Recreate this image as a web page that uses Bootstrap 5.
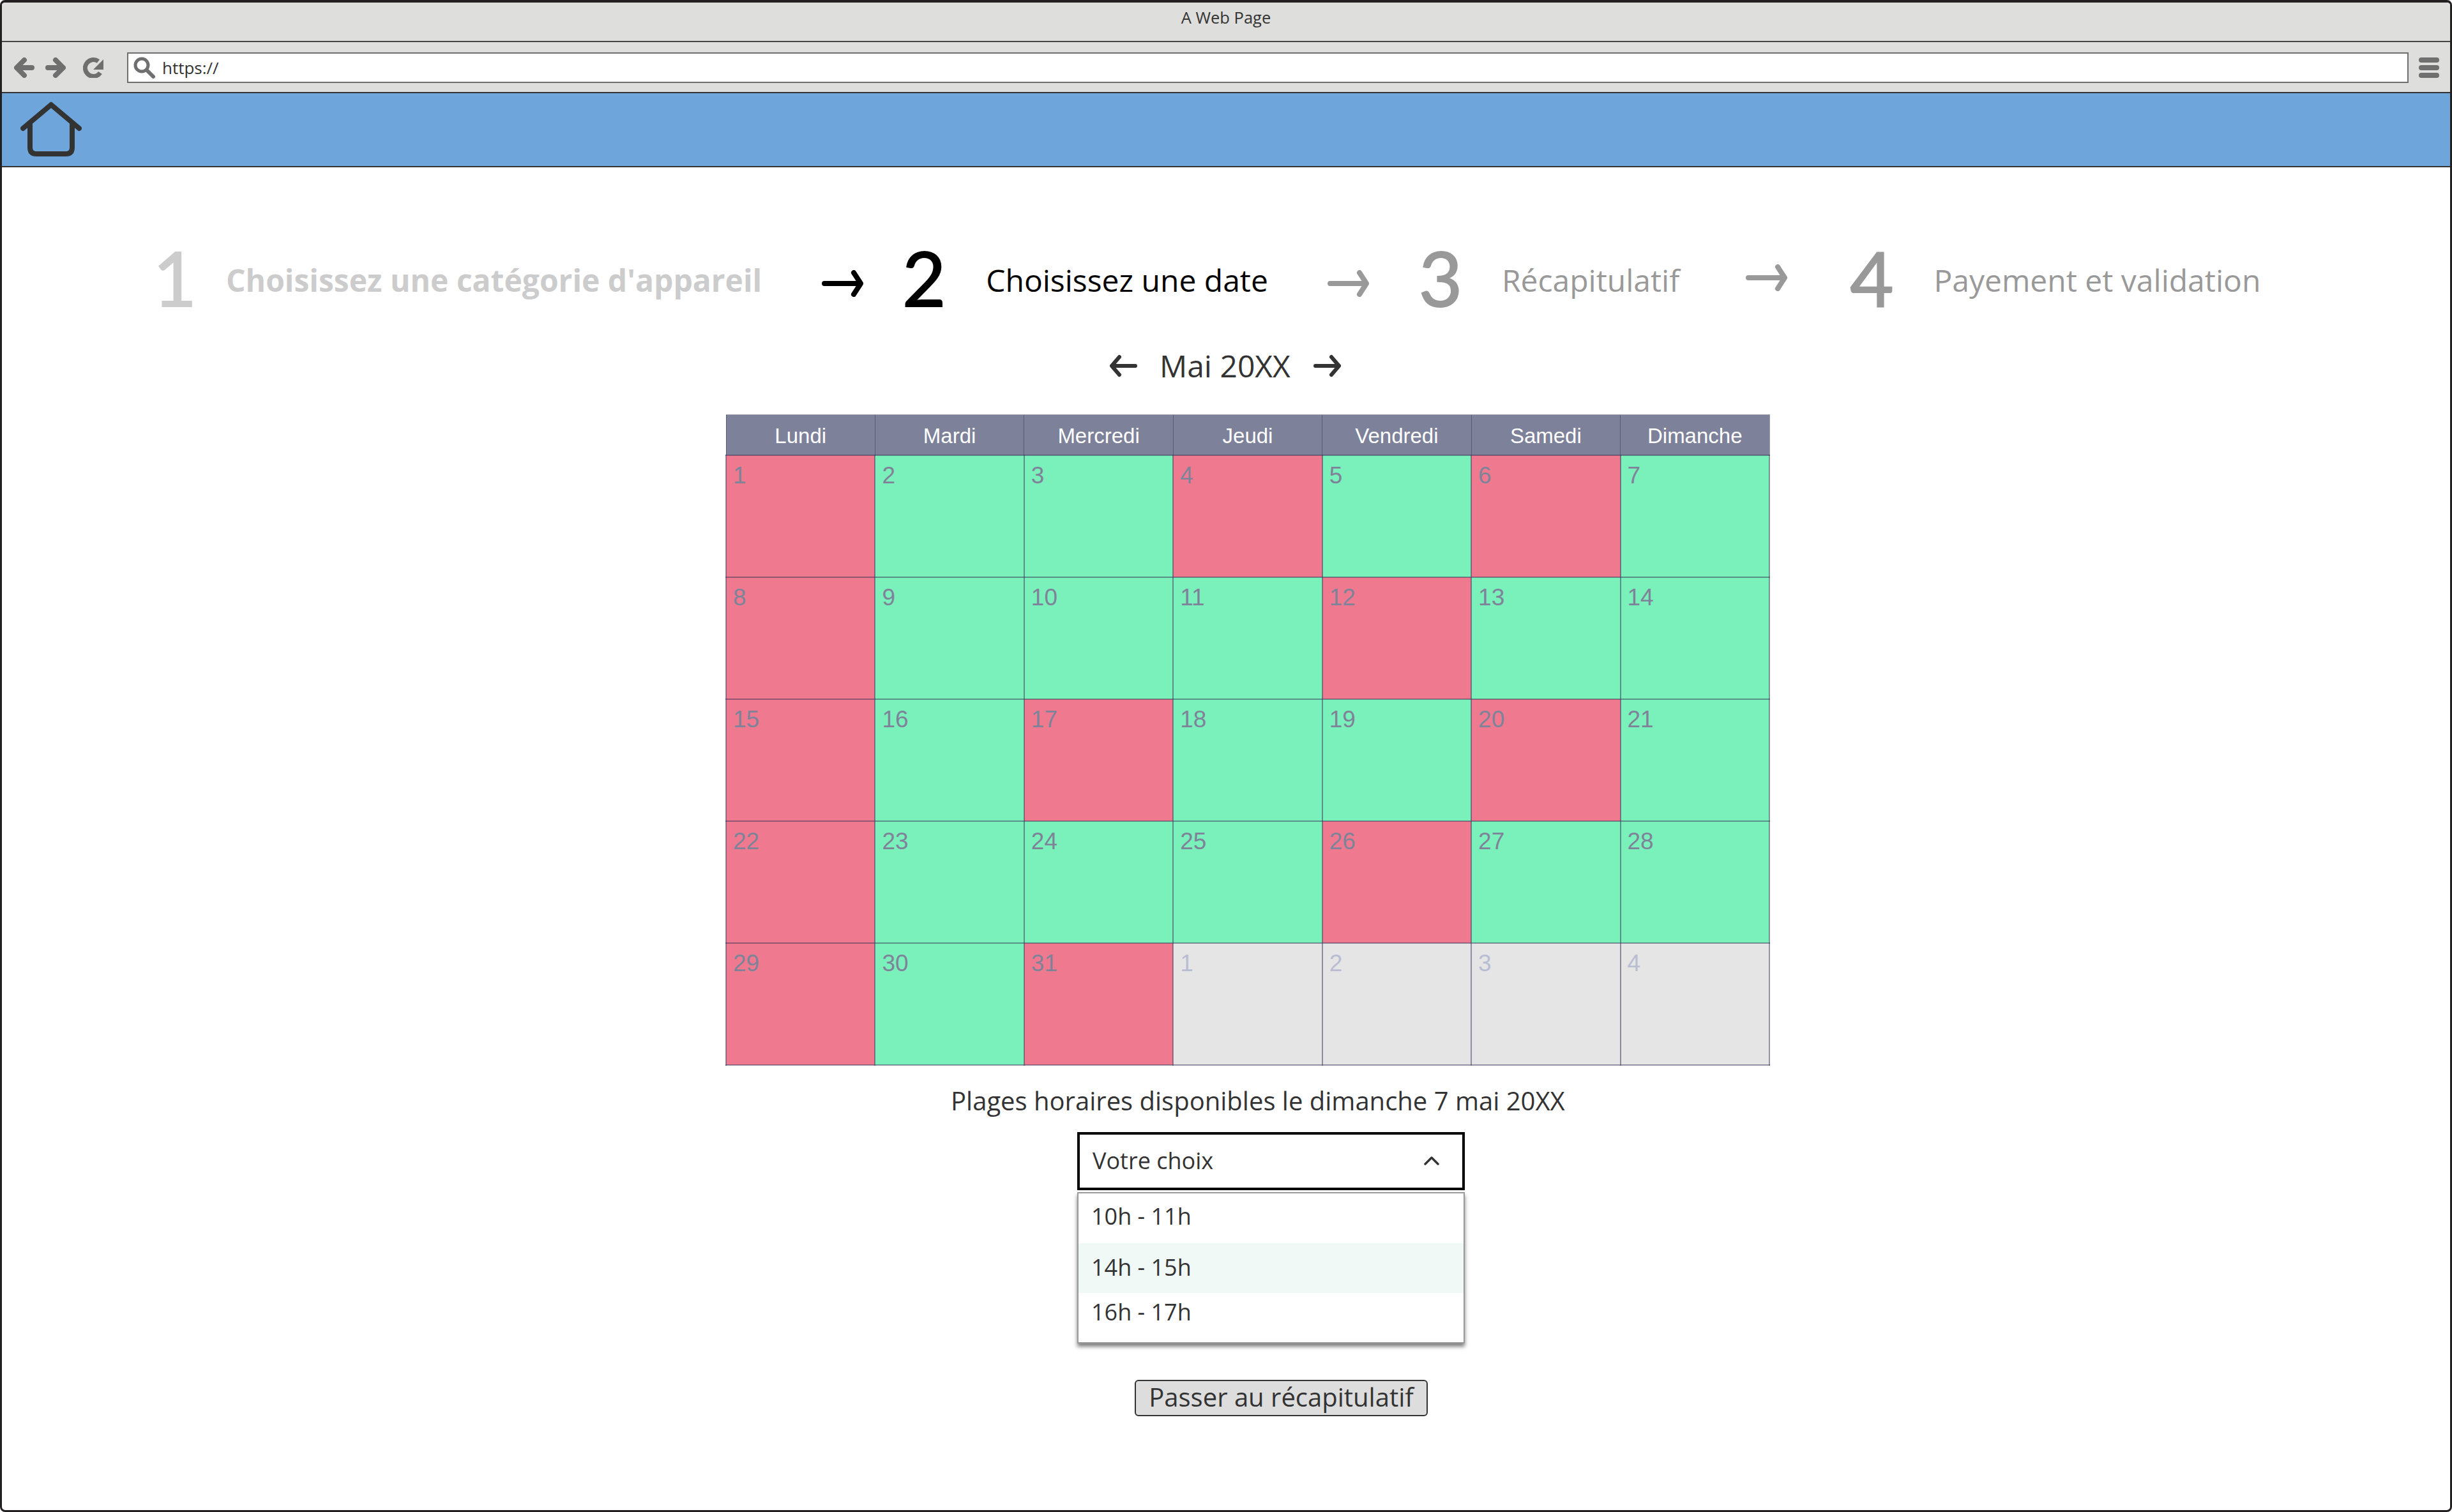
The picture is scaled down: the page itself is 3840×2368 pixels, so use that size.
<!DOCTYPE html>
<html lang="fr">
<head>
  <meta charset="UTF-8" />
  <meta name="viewport" content="width=device-width, initial-scale=1.0" />
  <title>A Web Page</title>
  <link href="https://cdn.jsdelivr.net/npm/bootstrap@5.3.0/dist/css/bootstrap.min.css" rel="stylesheet" />
  <style>
    body { font-family: "Open Sans", sans-serif; color: #333; background: #fff; }
    .win-frame { height: 2368px; border: 3px solid #231f20; border-top-width: 4px; border-radius: 8px; overflow: hidden; }
    .win-title { height: 62px; background: #dededc; border-bottom: 2px solid #444; font-size: 25.5px; color: #333; padding-bottom: 13px; }
    .win-bar { height: 78px; background: #dededc; padding: 2px 17px 0 19px; }
    .icon-fwd { margin-left: 17px; }
    .icon-reload { margin-left: 27px; }
    .addr-box { height: 48px; width: 3574px; margin-left: 35px; margin-right: 16px; background: #fff; border: 2px solid #6e6e6e; padding-left: 8px; font-size: 26px; }
    .addr-box span { margin-left: 11px; }
    .blue-bar { height: 118px; margin: 0 -1px; background: #6ea6dc; border-top: 2px solid #333; border-bottom: 2px solid #333; padding-left: 30px; }
    .step-row { padding-top: 118px; height: 228px; padding-left: 236px; }
    .step-num { font-family: Lato, sans-serif; font-size: 118px; line-height: 110px; width: 70px; text-align: center; -webkit-text-stroke: 2px currentColor; }
    .step-txt { font-size: 48px; line-height: 1; white-space: nowrap; margin-top: 8px; margin-left: 64px; }
    .step-off1 { color: #ccc; }
    .step-off1 .step-txt { font-weight: 700; margin-left: 45px; }
    .step-on { color: #000; margin-left: 59px; }
    .step-on .step-txt { margin-left: 62px; }
    .step-off2 { color: #999; }
    .step-three { margin-left: 76px; }
    .step-three .step-txt { margin-left: 61px; }
    .step-four { margin-left: 96px; }
    .step-four .step-txt { margin-left: 62px; }
    .step-arrow { flex: none; }
    .arrow-one { margin: 18px 0 0 94px; }
    .arrow-two { margin: 18px 0 0 93px; }
    .arrow-three { margin-left: 104px; }
    .month-row { height: 58px; margin-top: 54px; margin-left: 1735px; font-size: 48px; color: #333; }
    .month-txt { margin: 0 36px 0 35px; }
    .cal-zone { margin-left: 1133px; width: 1636px; margin-top: 47px; }
    .cal-table { table-layout: fixed; width: 1636px; margin: 0; border-color: rgba(55, 50, 85, .5); font-family: "Liberation Sans", sans-serif; }
    .cal-table thead th { --bs-table-bg: #7d8199; color: #fff; height: 63px; font-size: 33px; font-weight: 400; padding: 3px 0 0; text-align: center; vertical-align: middle; }
    .cal-table tbody td { height: 191px; font-size: 37px; line-height: 1; padding: 12px 10px; border-width: 2px; color: #7f8399; }
    .cal-table tbody td.day-off { --bs-table-bg: #e5e5e5; color: #b9bdd3; }
    .day-red { --bs-table-bg: #ef7a8f; }
    .day-green { --bs-table-bg: #7af0ba; }
    .slot-label { margin: 28px 0 0 353px; font-size: 40px; line-height: 54px; white-space: nowrap; color: #333; }
    .slot-picker { margin-left: 551px; width: 607px; margin-top: 22px; }
    .slot-toggle { height: 91px; border: 4px solid #000; border-radius: 0; background: #fff; font-size: 36px; padding: 0 35px 0 20px; color: #333; }
    .slot-toggle:hover { background: #fff; color: #333; border-color: #000; }
    .slot-toggle::after { display: none; }
    .slot-menu { position: static; width: 100%; margin-top: 3px; padding: 0; height: 237px; min-width: 0; border: 2px solid #999; border-radius: 0; box-shadow: 0 5px 6px rgba(0, 0, 0, .5); font-size: 36px; }
    .slot-menu .dropdown-item { padding: 0 0 0 20px; color: #333; }
    .slot-menu .slot-a { height: 78px; line-height: 72px; }
    .slot-menu .slot-b { height: 78px; line-height: 76px; background: #f1f9f7; }
    .slot-menu .slot-c { height: 77px; line-height: 60px; }
    .next-btn { margin: 57px 0 0 641px; height: 57px; width: 459px; padding: 0 0 3px; background: #ddd; border: 2px solid #333; border-radius: 6px; font-size: 40px; line-height: 1; color: #333; }
  </style>
</head>
<body>
  <div class="win-frame">
    <div class="win-title d-flex align-items-center justify-content-center">A Web Page</div>
    <div class="win-bar d-flex align-items-center">
      <svg width="32" height="32" viewBox="0 0 32 32" fill="none" stroke="#6f6f6f" stroke-width="8" stroke-linecap="round" stroke-linejoin="round"><path d="M28 16H5M16 4 4 16l12 12" /></svg>
      <svg class="icon-fwd" width="32" height="32" viewBox="0 0 32 32" fill="none" stroke="#6f6f6f" stroke-width="8" stroke-linecap="round" stroke-linejoin="round"><path d="M4 16h23M16 4l12 12-12 12" /></svg>
      <svg class="icon-reload" width="34" height="32" viewBox="0 0 34 32" fill="none"><path d="M27 24A13 13 0 1 1 24 6" stroke="#6f6f6f" stroke-width="7" /><path d="M32 3v16H16z" fill="#6f6f6f" /></svg>
      <div class="addr-box d-flex align-items-center">
        <svg width="34" height="34" viewBox="0 0 34 34" fill="none" stroke="#6f6f6f" stroke-linecap="round"><circle cx="13" cy="13" r="10" stroke-width="5" /><path d="M21 21l10 10" stroke-width="6" /></svg>
        <span>https://</span>
      </div>
      <svg width="32" height="32" viewBox="0 0 32 32" fill="#6f6f6f"><rect width="32" height="8" rx="4" /><rect y="12" width="32" height="8" rx="4" /><rect y="24" width="32" height="8" rx="4" /></svg>
    </div>
    <div class="blue-bar d-flex align-items-center">
      <svg width="96" height="88" viewBox="0 0 96 88" fill="none" stroke="#333" stroke-width="8" stroke-linecap="round" stroke-linejoin="round"><path d="M4 42 48 5l44 37" /><path d="M15 34v38q0 10 10 10h46q10 0 10-10V34" /></svg>
    </div>

    <div class="step-row d-flex align-items-center">
      <div class="d-flex align-items-center step-off1">
        <div class="step-num">1</div>
        <div class="step-txt">Choisissez une catégorie d'appareil</div>
      </div>
      <svg class="step-arrow arrow-one" width="66" height="42" viewBox="0 0 66 42" fill="none" stroke="#000" stroke-width="8" stroke-linecap="round" stroke-linejoin="round"><path d="M4 21h56M50 4l11 17-11 17" /></svg>
      <div class="d-flex align-items-center step-on">
        <div class="step-num">2</div>
        <div class="step-txt">Choisissez une date</div>
      </div>
      <svg class="step-arrow arrow-two" width="66" height="42" viewBox="0 0 66 42" fill="none" stroke="#999" stroke-width="8" stroke-linecap="round" stroke-linejoin="round"><path d="M4 21h56M50 4l11 17-11 17" /></svg>
      <div class="d-flex align-items-center step-off2 step-three">
        <div class="step-num">3</div>
        <div class="step-txt">Récapitulatif</div>
      </div>
      <svg class="step-arrow arrow-three" width="66" height="42" viewBox="0 0 66 42" fill="none" stroke="#999" stroke-width="8" stroke-linecap="round" stroke-linejoin="round"><path d="M4 21h56M50 4l11 17-11 17" /></svg>
      <div class="d-flex align-items-center step-off2 step-four">
        <div class="step-num">4</div>
        <div class="step-txt">Payement et validation</div>
      </div>
    </div>

    <div class="month-row d-flex align-items-center">
      <svg width="43" height="36" viewBox="0 0 43 36" fill="none" stroke="#333" stroke-width="6" stroke-linecap="round" stroke-linejoin="round"><path d="M40 18H5M15 4 3 18l12 14" /></svg>
      <span class="month-txt">Mai 20XX</span>
      <svg width="43" height="36" viewBox="0 0 43 36" fill="none" stroke="#333" stroke-width="6" stroke-linecap="round" stroke-linejoin="round"><path d="M3 18h35M28 4l12 14-12 14" /></svg>
    </div>

    <div class="cal-zone">
      <table class="table table-bordered cal-table">
        <thead>
          <tr><th>Lundi</th><th>Mardi</th><th>Mercredi</th><th>Jeudi</th><th>Vendredi</th><th>Samedi</th><th>Dimanche</th></tr>
        </thead>
        <tbody>
          <tr><td class="day-red">1</td><td class="day-green">2</td><td class="day-green">3</td><td class="day-red">4</td><td class="day-green">5</td><td class="day-red">6</td><td class="day-green">7</td></tr>
          <tr><td class="day-red">8</td><td class="day-green">9</td><td class="day-green">10</td><td class="day-green">11</td><td class="day-red">12</td><td class="day-green">13</td><td class="day-green">14</td></tr>
          <tr><td class="day-red">15</td><td class="day-green">16</td><td class="day-red">17</td><td class="day-green">18</td><td class="day-green">19</td><td class="day-red">20</td><td class="day-green">21</td></tr>
          <tr><td class="day-red">22</td><td class="day-green">23</td><td class="day-green">24</td><td class="day-green">25</td><td class="day-red">26</td><td class="day-green">27</td><td class="day-green">28</td></tr>
          <tr><td class="day-red">29</td><td class="day-green">30</td><td class="day-red">31</td><td class="day-off">1</td><td class="day-off">2</td><td class="day-off">3</td><td class="day-off">4</td></tr>
        </tbody>
      </table>

      <div class="slot-label">Plages horaires disponibles le dimanche 7 mai 20XX</div>
      <div class="dropdown slot-picker">
        <button class="btn dropdown-toggle slot-toggle w-100 d-flex align-items-center justify-content-between" type="button">
          Votre choix
          <svg width="26" height="14" viewBox="0 0 26 14" fill="none" stroke="#333" stroke-width="3.5" stroke-linecap="round" stroke-linejoin="round"><path d="M3 12 13 2l10 10" /></svg>
        </button>
        <ul class="dropdown-menu show slot-menu">
          <li><a class="dropdown-item slot-a" href="#">10h - 11h</a></li>
          <li><a class="dropdown-item slot-b" href="#">14h - 15h</a></li>
          <li><a class="dropdown-item slot-c" href="#">16h - 17h</a></li>
        </ul>
      </div>
      <button class="btn next-btn" type="button">Passer au récapitulatif</button>
    </div>
  </div>
  <script src="https://cdn.jsdelivr.net/npm/bootstrap@5.3.0/dist/js/bootstrap.bundle.min.js"></script>
</body>
</html>
